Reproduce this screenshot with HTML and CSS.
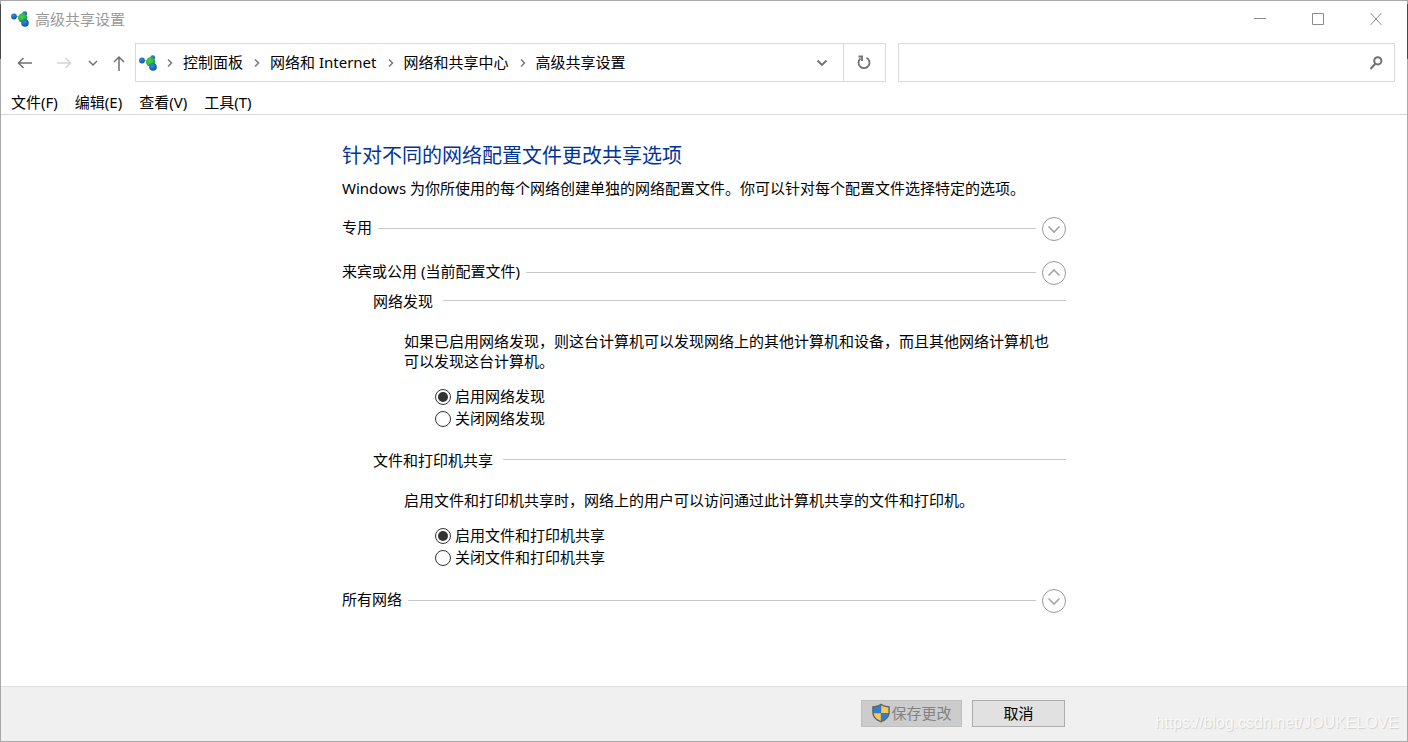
FILE: index.html
```html
<!DOCTYPE html>
<html lang="zh-CN">
<head>
<meta charset="utf-8">
<title>高级共享设置</title>
<link rel="stylesheet" href="styles.css">
</head>
<body>
<svg class="defs" aria-hidden="true">
  <defs>
    <radialGradient id="blue" cx="40%" cy="35%" r="70%"><stop offset="0" stop-color="#2d8fdc"/><stop offset="1" stop-color="#0b4f9c"/></radialGradient>
    <radialGradient id="green" cx="40%" cy="40%" r="70%"><stop offset="0" stop-color="#4bd44b"/><stop offset="1" stop-color="#149a38"/></radialGradient>
    <symbol id="network" viewBox="0 0 18 16">
      <path d="M3 5.500H10M10 6L14 2.500M11 7l3 5" stroke="#9cc7e0" stroke-width="1"/>
      <circle cx="13.700" cy="2.700" r="2.400" fill="url(#blue)"/>
      <circle cx="11.700" cy="7" r="4.700" fill="url(#green)"/>
      <circle cx="3" cy="5.500" r="2.900" fill="url(#blue)"/>
      <circle cx="14" cy="12" r="3.800" fill="url(#blue)"/>
    </symbol>
    <symbol id="chevron" viewBox="0 0 14 14"><path d="M1.500 4.500L7 10l5.500-5.500" fill="none" stroke="currentColor" stroke-width="1.700"/></symbol>
    <symbol id="next" viewBox="0 0 6 10"><path d="M1 1.500L4.500 5 1 8.500" fill="none" stroke="#7a7a7a" stroke-width="1.500"/></symbol>
    <symbol id="small-down" viewBox="0 0 10 8"><path d="M1 2l4 4 4-4" fill="none" stroke="currentColor" stroke-width="1.500"/></symbol>
  </defs>
</svg>
<div class="window">
  <header class="titlebar">
    <svg class="network-icon"><use href="#network"/></svg>
    <span class="window-title">高级共享设置</span>
    <div class="window-controls">
      <button class="window-button" aria-label="最小化"><svg width="14" height="14" viewBox="0 0 14 14"><path d="M1 6.500h12"/></svg></button>
      <button class="window-button" aria-label="最大化"><svg width="14" height="14" viewBox="0 0 14 14"><path d="M1.500 1.500h11v11h-11z"/></svg></button>
      <button class="window-button" aria-label="关闭"><svg width="14" height="14" viewBox="0 0 14 14"><path d="M1.500 1l11 12M12.500 1l-11 12"/></svg></button>
    </div>
  </header>

  <nav class="navbar">
    <div class="history">
      <button class="nav-button" aria-label="后退"><svg width="16" height="14" viewBox="0 0 16 14"><path d="M6.500 2L1.500 7l5 5M1.500 7H15"/></svg></button>
      <button class="nav-button forward" aria-label="前进" disabled><svg width="16" height="14" viewBox="0 0 16 14"><path d="M9.500 2l5 5-5 5M14.500 7H1"/></svg></button>
      <button class="nav-button recent" aria-label="最近浏览的位置"><svg width="10" height="8"><use href="#small-down"/></svg></button>
      <button class="nav-button up" aria-label="上移"><svg width="12" height="16" viewBox="0 0 12 16"><path d="M1 7l5-5 5 5M6 2v14"/></svg></button>
    </div>
    <div class="address">
      <svg class="network-icon"><use href="#network"/></svg>
      <ol class="crumbs">
        <li><svg class="sep"><use href="#next"/></svg><a href="#">控制面板</a></li>
        <li><svg class="sep"><use href="#next"/></svg><a href="#">网络和 Internet</a></li>
        <li><svg class="sep"><use href="#next"/></svg><a href="#">网络和共享中心</a></li>
        <li><svg class="sep"><use href="#next"/></svg><a href="#">高级共享设置</a></li>
      </ol>
      <button class="address-button" aria-label="历史位置"><svg width="12" height="10" viewBox="0 0 12 10"><path d="M1.500 2.500L6 7l4.500-4.500"/></svg></button>
      <button class="address-button refresh" aria-label="刷新"><svg width="14" height="16" viewBox="0 0 14 16"><path d="M3.500 3.500A5.500 5.500 0 1 0 9.500 2.800M1.500 1.500H5V6"/></svg></button>
    </div>
    <div class="search">
      <input class="search-input" type="text" aria-label="搜索">
      <button class="search-button" aria-label="开始搜索"><svg width="14" height="14" viewBox="0 0 14 14"><circle cx="8.800" cy="4.800" r="3.600"/><path d="M6.500 7.500L1.500 13"/></svg></button>
    </div>
  </nav>

  <div class="menubar">
    <button class="menu">文件(F)</button>
    <button class="menu">编辑(E)</button>
    <button class="menu">查看(V)</button>
    <button class="menu">工具(T)</button>
  </div>

  <main class="content">
    <div class="column">
      <h1 class="heading">针对不同的网络配置文件更改共享选项</h1>
      <p class="intro">Windows 为你所使用的每个网络创建单独的网络配置文件。你可以针对每个配置文件选择特定的选项。</p>

      <section class="profile">
        <div class="profile-head"><h2 class="label">专用</h2><span class="rule"></span>
          <button class="toggle" aria-label="展开专用" aria-expanded="false"><svg width="14" height="14"><use href="#chevron"/></svg></button></div>
      </section>

      <section class="profile">
        <div class="profile-head"><h2 class="label">来宾或公用 (当前配置文件)</h2><span class="rule"></span>
          <button class="toggle open" aria-label="折叠来宾或公用" aria-expanded="true"><svg width="14" height="14"><use href="#chevron"/></svg></button></div>
        <div class="group">
          <div class="group-head"><h3 class="label">网络发现</h3><span class="rule"></span></div>
          <p class="description">如果已启用网络发现，则这台计算机可以发现网络上的其他计算机和设备，而且其他网络计算机也可以发现这台计算机。</p>
          <div class="options">
            <label class="option"><input class="radio" type="radio" name="discovery" checked><span>启用网络发现</span></label>
            <label class="option"><input class="radio" type="radio" name="discovery"><span>关闭网络发现</span></label>
          </div>
        </div>
        <div class="group">
          <div class="group-head"><h3 class="label">文件和打印机共享</h3><span class="rule"></span></div>
          <p class="description">启用文件和打印机共享时，网络上的用户可以访问通过此计算机共享的文件和打印机。</p>
          <div class="options">
            <label class="option"><input class="radio" type="radio" name="sharing" checked><span>启用文件和打印机共享</span></label>
            <label class="option"><input class="radio" type="radio" name="sharing"><span>关闭文件和打印机共享</span></label>
          </div>
        </div>
      </section>

      <section class="profile">
        <div class="profile-head"><h2 class="label">所有网络</h2><span class="rule"></span>
          <button class="toggle" aria-label="展开所有网络" aria-expanded="false"><svg width="14" height="14"><use href="#chevron"/></svg></button></div>
      </section>
    </div>
  </main>

  <footer class="footer">
    <div class="column actions">
      <button class="button save" disabled>
        <svg width="20" height="20" viewBox="0 0 20 20">
          <path d="M10 .5C7.500 2.300 4.500 3 1.200 3.200V9c0 5 3.300 8.300 8.800 10.500C15.500 17.300 18.800 14 18.800 9V3.200C15.500 3 12.500 2.300 10 .5z" fill="#5c646c"/>
          <path d="M9.800 2.200C7.500 3.600 5 4.300 2.600 4.500V10h7.200z" fill="#2f80cc"/>
          <path d="M10.200 2.200c2.300 1.400 4.800 2.100 7.200 2.300V10h-7.200z" fill="#fbc658"/>
          <path d="M2.700 10.200h7.100V18C5.500 16.200 3 13.800 2.700 10.200z" fill="#fbc658"/>
          <path d="M17.300 10.200h-7.100V18c4.300-1.800 6.800-4.200 7.100-7.800z" fill="#2f80cc"/>
        </svg><span>保存更改</span>
      </button>
      <button class="button">取消</button>
    </div>
    <span class="watermark">https://blog.csdn.net/JOUKELOVE</span>
  </footer>
</div>
</body>
</html>
```

FILE: styles.css
```css
* { box-sizing: border-box; }

body {
  margin: 0;
  padding: 1px;
  min-height: 100vh;
  display: flex;
  color: #000;
  background: linear-gradient(#a8a8a8 4px, #484848 4px, #484848 59px, #a8a8a8 59px);
  font: 15px/20px "Noto Sans", "Noto Sans CJK SC", sans-serif;
}

h1, h2, h3, p, ol { margin: 0; padding: 0; font-weight: normal; font-size: 15px; }
button, input { font: inherit; color: inherit; border: 0; padding: 0; background: none; }
button { display: flex; align-items: center; justify-content: center; }
svg { flex: none; fill: none; stroke-linecap: butt; }

.defs { position: absolute; width: 0; height: 0; }

.window { flex: 1; min-width: 0; display: flex; flex-direction: column; background: #fff; }

.titlebar { display: flex; align-items: center; height: 36px; padding: 0 2px 0 10px; color: #999; }
.network-icon { width: 18px; height: 16px; }
.window-title { flex: 1; margin-left: 6px; }
.window-controls { display: flex; }
.window-button { width: 58px; height: 36px; }
.window-button svg { stroke: #8c8c8c; }

.navbar { display: flex; align-items: center; padding: 6px 12px 0 0; }
.history { display: flex; align-items: center; width: 134px; padding-left: 16px; }
.nav-button { height: 39px; stroke: #707070; color: #707070; }
.nav-button svg { stroke-width: 1.5px; }
.forward { margin-left: 23px; stroke: #d4d4d4; }
.recent { margin-left: 16px; }
.up { margin-left: 15px; }
.address { flex: 751 1 0; display: flex; align-items: center; height: 39px; border: 1px solid #d9d9d9; padding-left: 3px; }
.crumbs { flex: 1; display: flex; list-style: none; white-space: nowrap; }
.crumbs li { display: flex; align-items: center; }
.crumbs a { padding-bottom: 2px; color: inherit; text-decoration: none; }
.sep { width: 6px; height: 10px; margin: 0 10px 0 11px; }
.crumbs li:first-child .sep { margin-left: 10px; }
.address-button { width: 41px; height: 37px; }
.address-button svg { stroke: #707070; stroke-width: 1.8px; }
.refresh { width: 42px; border-left: 1px solid #d9d9d9; }
.search { flex: 499 1 0; display: flex; height: 39px; margin-left: 12px; border: 1px solid #d9d9d9; }
.search-input { flex: 1; min-width: 0; padding: 0 8px; outline: 0; }
.search-button { width: 36px; }
.search-button svg { stroke: #707070; stroke-width: 2px; }

.menubar { display: flex; gap: 17px; height: 33px; padding: 8px 10px 0; border-bottom: 1px solid #d9d9d9; }
.menu { height: 24px; }

.content { flex: 1; padding: 27px 16px; }
.column { width: 100%; max-width: 724px; margin: 0 auto; }
.heading { color: #003399; font-size: 20px; line-height: 28px; }
.intro { margin: 8px 0 19px; }
.profile { margin-bottom: 20px; }
.profile-head { display: flex; align-items: center; }
.profile-head .label { height: 24px; }
.rule { flex: 1; height: 1px; margin: 0 6px 2px; background: #c8c8c8; }
.toggle { width: 24px; height: 24px; border: 1px solid #999; border-radius: 50%; color: #a6a6a6; }
.open svg { transform: rotate(180deg); }

.group { margin: 6px 0 20px 31px; }
.group-head { display: flex; align-items: center; }
.group-head .rule { margin: 0 0 2px 10px; }
.description { margin: 20px 0 15px 31px; padding-right: 12px; }
.options { margin-left: 62px; }
.option { display: flex; align-items: flex-start; height: 22px; }
.radio {
  appearance: none;
  flex: none;
  align-self: center;
  width: 16px;
  height: 16px;
  margin: 0 4px 0 0;
  padding: 2px;
  border: 1px solid #333;
  border-radius: 50%;
}
.radio:checked { background: #333 content-box; }

.footer {
  position: relative;
  padding: 13px 16px 14px;
  border-top: 1px solid #dfdfdf;
  background: #f0f0f0;
}
.actions { display: flex; justify-content: flex-end; gap: 10px; padding-right: 1px; }
.button { width: 93px; height: 27px; padding-bottom: 2px; border: 1px solid #adadad; background: #e1e1e1; }
.save { width: 101px; border-color: #bfbfbf; background: #ccc; color: #838383; }
.watermark {
  position: absolute;
  right: 8px;
  bottom: 8px;
  color: #f8f8f8;
  text-shadow: 1px 1px 1px #d0d0d0;
  font: 16px/20px "Liberation Sans", Arial, sans-serif;
}
```
